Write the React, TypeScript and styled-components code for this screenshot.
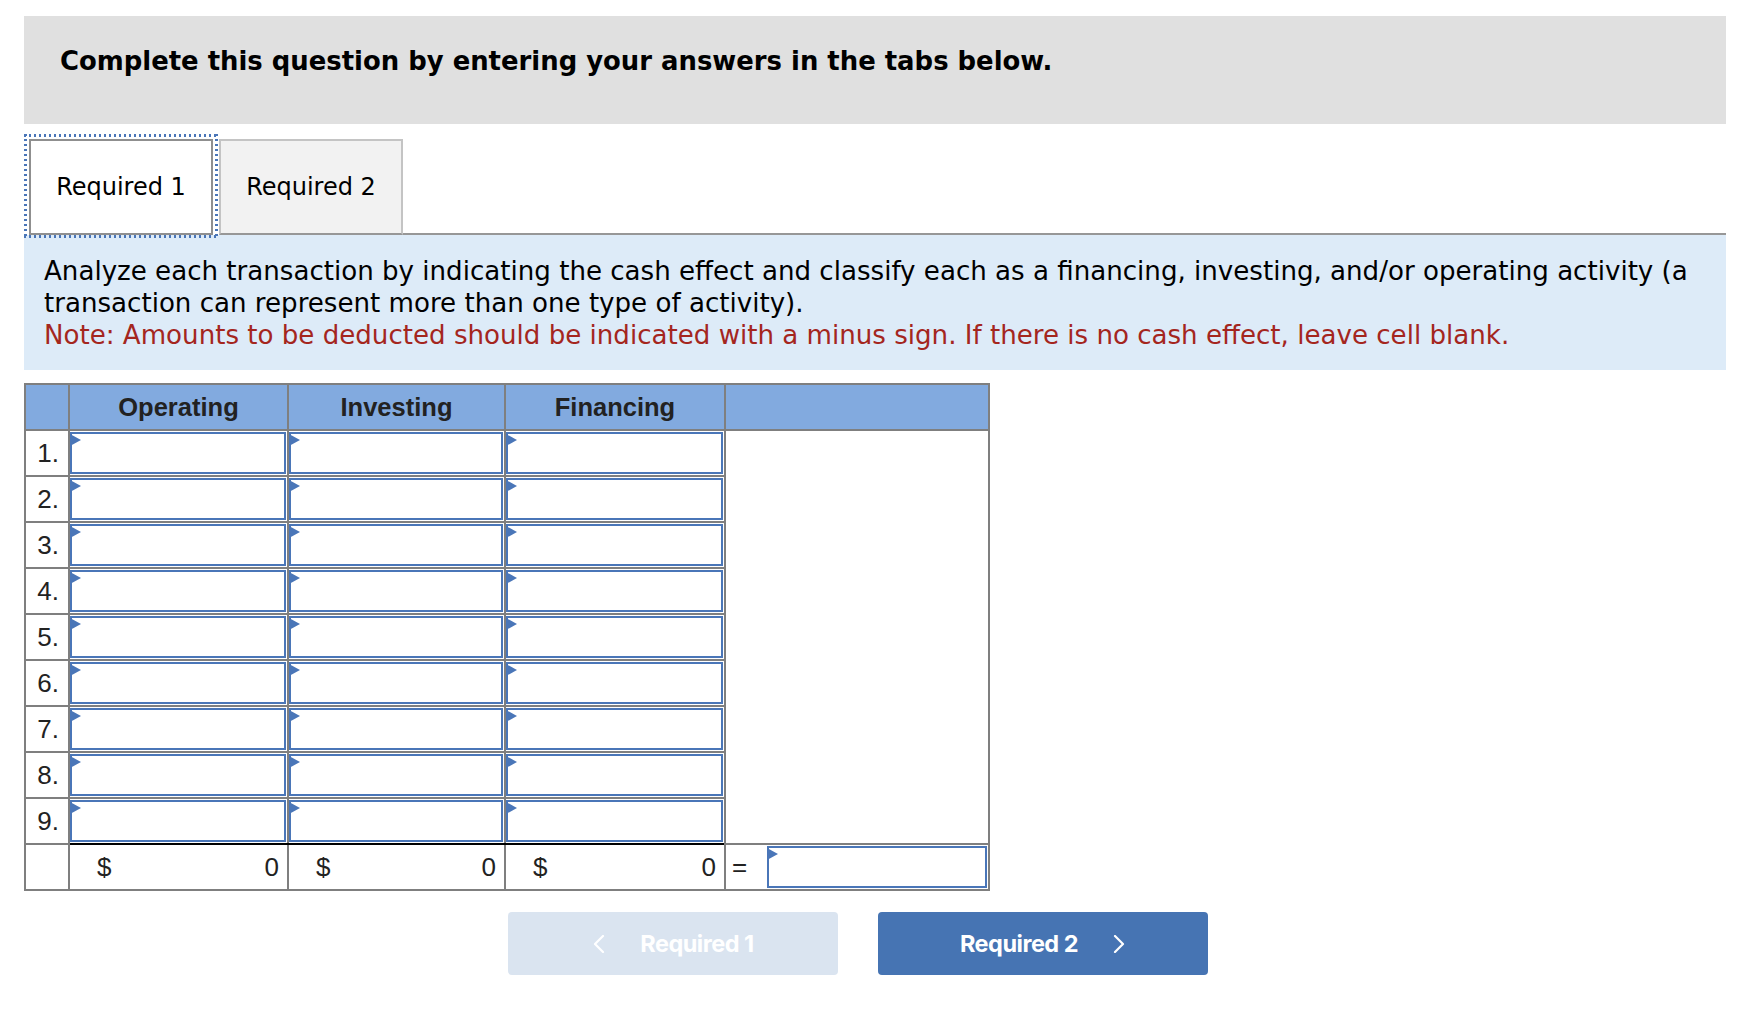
import React from 'react';
import styled, { createGlobalStyle } from 'styled-components';

const GlobalStyle = createGlobalStyle`
  html, body {
    margin: 0;
    padding: 0;
    background: #fff;
  }
  body {
    font-family: "DejaVu Sans", Verdana, sans-serif;
    color: #000;
  }
`;

const focusBlue = '#4a76b8';

const Page = styled.div`
  padding: 16px 20px 40px 24px;
`;

const Banner = styled.div`
  height: 108px;
  box-sizing: border-box;
  padding: 30px 0 0 36px;
  background: #e0e0e0;
  font-size: 25.9px;
  font-weight: 700;
`;

const TabBar = styled.div`
  display: flex;
  height: 96px;
  margin-top: 15px;
`;

const Tab = styled.button<{ $active?: boolean }>`
  position: relative;
  width: 184px;
  box-sizing: border-box;
  margin-left: ${p => (p.$active ? '5px' : '6px')};
  padding: 0;
  border: 2px solid ${p => (p.$active ? '#8f8f8f' : '#c4c4c4')};
  border-bottom-color: ${p => (p.$active ? '#8f8f8f' : '#979797')};
  background: ${p => (p.$active ? '#fff' : '#f2f2f2')};
  font-family: "DejaVu Sans", Verdana, sans-serif;
  font-size: 24px;
  color: #000;
  cursor: pointer;

  ${p =>
    p.$active &&
    `
    &::after {
      content: '';
      position: absolute;
      top: -7px;
      left: -7px;
      right: -7px;
      bottom: -5px;
      background:
        linear-gradient(90deg, ${focusBlue} 50%, transparent 50%) top left / 5px 3px repeat-x,
        linear-gradient(90deg, ${focusBlue} 50%, transparent 50%) bottom left / 5px 3px repeat-x,
        linear-gradient(180deg, ${focusBlue} 50%, transparent 50%) top left / 3px 5px repeat-y,
        linear-gradient(180deg, ${focusBlue} 50%, transparent 50%) top right / 3px 5px repeat-y;
    }
  `}
`;

const TabRule = styled.div`
  flex: 1;
  border-bottom: 2px solid #979797;
`;

const Instructions = styled.div`
  background: #ddebf8;
  padding: 20px 20px 19px;
  font-size: 26.1px;
  line-height: 32px;
`;

const Note = styled.div`
  color: #a4261e;
`;

const Grid = styled.table`
  margin-top: 13px;
  width: 964px;
  border-collapse: collapse;
  table-layout: fixed;
  border: 2px solid #7f7f7f;
  font-family: "Liberation Sans", Arial, sans-serif;
  color: #222;
`;

const HeadCell = styled.th`
  height: 44px;
  padding: 0;
  border: 2px solid #7f7f7f;
  background: #82aadf;
  font-size: 25.5px;
  font-weight: 700;
  text-align: center;
`;

const NumCell = styled.td`
  padding: 0 9px 0 0;
  border: 2px solid #7f7f7f;
  font-size: 26px;
  line-height: 30px;
  text-align: right;
  vertical-align: middle;
`;

const EntryCell = styled.td<{ $rule?: boolean }>`
  padding: 1px 1px 1px 0;
  border: 2px solid #7f7f7f;
  ${p => p.$rule && 'border-bottom-color: #000;'}
`;

const BlankCell = styled.td`
  border: 2px solid #7f7f7f;
  background: #fff;
`;

const Field = styled.div`
  position: relative;
  height: 42px;
  box-sizing: border-box;
  border: 2px solid ${focusBlue};
  background: #fff;
`;

const FieldInput = styled.input`
  width: 100%;
  height: 100%;
  box-sizing: border-box;
  border: none;
  outline: none;
  padding: 0 8px;
  background: transparent;
  font-family: "Liberation Sans", Arial, sans-serif;
  font-size: 24px;
  text-align: right;
`;

const Marker = styled.span`
  position: absolute;
  top: 0;
  left: -2px;
  width: 0;
  height: 0;
  border-top: 6.5px solid transparent;
  border-bottom: 6.5px solid transparent;
  border-left: 11px solid ${focusBlue};
`;

const MoneyCell = styled.td`
  padding: 0;
  border: 2px solid #7f7f7f;
  border-top-color: #000;
  font-size: 26px;
`;

const Money = styled.div`
  display: flex;
  justify-content: space-between;
  align-items: center;
  height: 44px;
  padding: 0 8px 0 27px;
`;

const CheckCell = styled.td`
  padding: 1px 1px 1px 0;
  border: 2px solid #7f7f7f;
`;

const CheckRow = styled.div`
  display: flex;
  align-items: center;
`;

const Equals = styled.span`
  width: 41px;
  padding-left: 6px;
  box-sizing: border-box;
  font-size: 26px;
`;

const CheckField = styled.div`
  flex: 1;
`;

const Nav = styled.div`
  display: flex;
  gap: 40px;
  margin: 21px 0 0 484px;
`;

const NavButton = styled.button<{ $primary?: boolean }>`
  display: flex;
  align-items: center;
  justify-content: center;
  gap: 34px;
  width: 330px;
  height: 63px;
  border: none;
  border-radius: 4px;
  background: ${p => (p.$primary ? '#4674b3' : '#dae4f0')};
  color: #fff;
  font-family: Inter, "Liberation Sans", sans-serif;
  font-size: 23.5px;
  font-weight: 700;
  letter-spacing: -0.5px;
  cursor: ${p => (p.$primary ? 'pointer' : 'default')};
`;

const Chevron = ({ dir }: { dir: 'left' | 'right' }) => (
  <svg width="14" height="18" viewBox="0 0 14 18" fill="none">
    <polyline
      points={dir === 'left' ? '11,1 3,9 11,17' : '3,1 11,9 3,17'}
      stroke="#fff"
      strokeWidth="2.2"
      strokeLinecap="round"
      strokeLinejoin="round"
    />
  </svg>
);

const Entry = () => (
  <Field>
    <Marker />
    <FieldInput type="text" />
  </Field>
);

const rows = [1, 2, 3, 4, 5, 6, 7, 8, 9];
const columns = ['Operating', 'Investing', 'Financing'];

export default function App() {
  return (
    <>
      <GlobalStyle />
      <Page>
        <Banner>Complete this question by entering your answers in the tabs below.</Banner>

        <TabBar>
          <Tab $active>Required 1</Tab>
          <Tab>Required 2</Tab>
          <TabRule />
        </TabBar>

        <Instructions>
          Analyze each transaction by indicating the cash effect and classify each as a financing, investing, and/or operating activity (a transaction can represent more than one type of activity).
          <Note>
            Note: Amounts to be deducted should be indicated with a minus sign. If there is no cash effect, leave cell blank.
          </Note>
        </Instructions>

        <Grid>
          <colgroup>
            <col style={{ width: 44 }} />
            <col style={{ width: 219 }} />
            <col style={{ width: 217 }} />
            <col style={{ width: 220 }} />
            <col style={{ width: 264 }} />
          </colgroup>
          <thead>
            <tr>
              <HeadCell />
              {columns.map(c => (
                <HeadCell key={c}>{c}</HeadCell>
              ))}
              <HeadCell />
            </tr>
          </thead>
          <tbody>
            {rows.map(n => (
              <tr key={n}>
                <NumCell>{n}.</NumCell>
                {columns.map(c => (
                  <EntryCell key={c} $rule={n === 9}>
                    <Entry />
                  </EntryCell>
                ))}
                {n === 1 && <BlankCell rowSpan={9} />}
              </tr>
            ))}
            <tr>
              <NumCell />
              {columns.map(c => (
                <MoneyCell key={c}>
                  <Money>
                    <span>$</span>
                    <span>0</span>
                  </Money>
                </MoneyCell>
              ))}
              <CheckCell>
                <CheckRow>
                  <Equals>=</Equals>
                  <CheckField>
                    <Entry />
                  </CheckField>
                </CheckRow>
              </CheckCell>
            </tr>
          </tbody>
        </Grid>

        <Nav>
          <NavButton disabled>
            <Chevron dir="left" />
            Required 1
          </NavButton>
          <NavButton $primary>
            Required 2
            <Chevron dir="right" />
          </NavButton>
        </Nav>
      </Page>
    </>
  );
}
